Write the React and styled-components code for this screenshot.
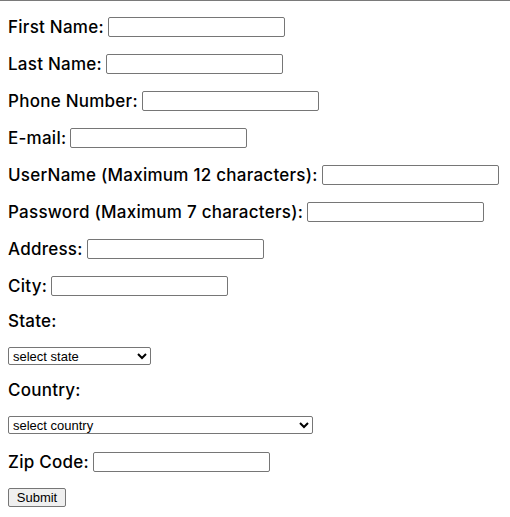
import React from 'react';
import styled, { createGlobalStyle } from 'styled-components';

const GlobalStyle = createGlobalStyle`
	body {
		margin: 0;
		background: #fff;
	}
`

const Page = styled.form`
	box-sizing: border-box;
	width: 510px;
	min-height: 517px;
	border-top: 1px solid #7a7a7a;
	padding: 0 8px;
	font-family: Inter, "Noto Sans", sans-serif;
	color: #000;
`

const Row = styled.div`
	display: flex;
	align-items: center;
	gap: 4px;
	height: ${props => props.h || 20}px;
	margin-top: ${props => props.top}px;
`

const Label = styled.label`
	font-size: 17px;
	font-weight: 500;
	letter-spacing: 0.25px;
	white-space: nowrap;
`

const TextInput = styled.input`
	box-sizing: border-box;
	width: 177px;
	height: 20px;
	margin: 0;
	border: 1px solid #767676;
	border-radius: 2px;
	background: #fff;
`

const Select = styled.select`
	box-sizing: border-box;
	width: ${props => props.w}px;
	height: 18px;
	margin: 0;
	padding: 0;
	border: 1px solid #767676;
	border-radius: 2px;
	background: #fff;
	font-family: "Liberation Sans", Arial, sans-serif;
	font-size: 13px;
	color: #000;
`

const Button = styled.button`
	box-sizing: border-box;
	width: 58px;
	height: 19px;
	margin: 0;
	padding: 0;
	border: 1px solid #767676;
	border-radius: 2px;
	background: #efefef;
	font-family: "Liberation Sans", Arial, sans-serif;
	font-size: 13px;
	color: #000;
`

const fields = [
	'First Name:',
	'Last Name:',
	'Phone Number:',
	'E-mail:',
	'UserName (Maximum 12 characters):',
	'Password (Maximum 7 characters):',
	'Address:',
	'City:',
]

export default function App() {
	return <>
		<GlobalStyle/>
		<Page onSubmit={e => e.preventDefault()}>
			{fields.map((f, i) =>
				<Row key={f} top={i === 0 ? 16 : 17}>
					<Label>{f}</Label>
					<TextInput type="text"/>
				</Row>
			)}
			<Row top={15}><Label>State:</Label></Row>
			<Row top={16} h={18}>
				<Select w={143}><option>select state</option></Select>
			</Row>
			<Row top={15}><Label>Country:</Label></Row>
			<Row top={16} h={18}>
				<Select w={305}><option>select country</option></Select>
			</Row>
			<Row top={18}>
				<Label>Zip Code:</Label>
				<TextInput type="text"/>
			</Row>
			<Row top={16} h={19}>
				<Button type="submit">Submit</Button>
			</Row>
		</Page>
	</>
}
